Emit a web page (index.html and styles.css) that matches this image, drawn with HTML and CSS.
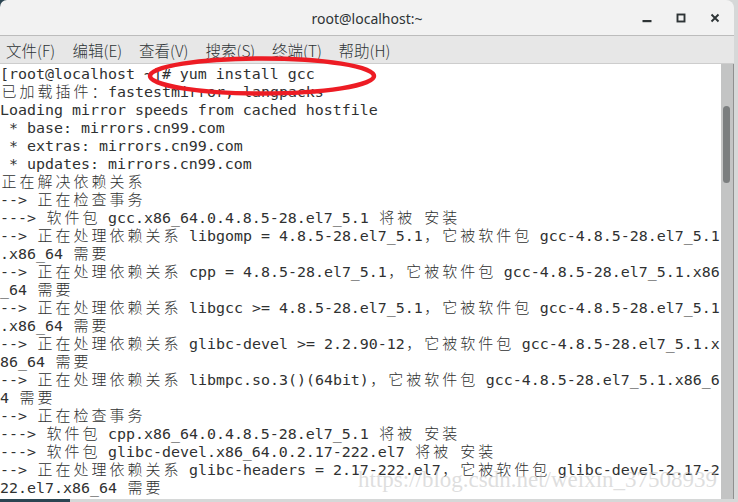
FILE: index.html
```html
<!DOCTYPE html>
<html>
<head>
<meta charset="utf-8">
<title>root@localhost:~</title>
<link rel="stylesheet" href="styles.css">
</head>
<body>
<div class="window">
  <header class="titlebar">
    <div class="spacer"></div>
    <div class="title">root@localhost:~</div>
    <div class="controls">
      <span class="btn"><svg width="10" height="10" viewBox="0 0 10 10"><rect x="0.5" y="7" width="9" height="2.2" fill="#2e3436"/></svg></span>
      <span class="btn"><svg width="10" height="10" viewBox="0 0 10 10"><rect x="1.5" y="1.5" width="7" height="7" fill="none" stroke="#2e3436" stroke-width="1.9"/></svg></span>
      <span class="btn"><svg width="10" height="10" viewBox="0 0 10 10"><path d="M1.5 1.5 L8.5 8.5 M8.5 1.5 L1.5 8.5" fill="none" stroke="#2e3436" stroke-width="1.9"/></svg></span>
    </div>
  </header>
  <nav class="menubar">
    <span class="item">文件(F)</span>
    <span class="item">编辑(E)</span>
    <span class="item">查看(V)</span>
    <span class="item">搜索(S)</span>
    <span class="item">终端(T)</span>
    <span class="item">帮助(H)</span>
  </nav>
  <main class="term">
    <div class="screen">
<div class="ln">[root@localhost ~]# yum install gcc</div>
<div class="ln"><span class="w">已加载插件：</span>fastestmirror, langpacks</div>
<div class="ln">Loading mirror speeds from cached hostfile</div>
<div class="ln"> * base: mirrors.cn99.com</div>
<div class="ln"> * extras: mirrors.cn99.com</div>
<div class="ln"> * updates: mirrors.cn99.com</div>
<div class="ln"><span class="w">正在解决依赖关系</span></div>
<div class="ln">--&gt; <span class="w">正在检查事务</span></div>
<div class="ln">---&gt; <span class="w">软件包</span> gcc.x86_64.0.4.8.5-28.el7_5.1 <span class="w">将被</span> <span class="w">安装</span></div>
<div class="ln">--&gt; <span class="w">正在处理依赖关系</span> libgomp = 4.8.5-28.el7_5.1<span class="w">，它被软件包</span> gcc-4.8.5-28.el7_5.1</div>
<div class="ln">.x86_64 <span class="w">需要</span></div>
<div class="ln">--&gt; <span class="w">正在处理依赖关系</span> cpp = 4.8.5-28.el7_5.1<span class="w">，它被软件包</span> gcc-4.8.5-28.el7_5.1.x86</div>
<div class="ln">_64 <span class="w">需要</span></div>
<div class="ln">--&gt; <span class="w">正在处理依赖关系</span> libgcc &gt;= 4.8.5-28.el7_5.1<span class="w">，它被软件包</span> gcc-4.8.5-28.el7_5.1</div>
<div class="ln">.x86_64 <span class="w">需要</span></div>
<div class="ln">--&gt; <span class="w">正在处理依赖关系</span> glibc-devel &gt;= 2.2.90-12<span class="w">，它被软件包</span> gcc-4.8.5-28.el7_5.1.x</div>
<div class="ln">86_64 <span class="w">需要</span></div>
<div class="ln">--&gt; <span class="w">正在处理依赖关系</span> libmpc.so.3()(64bit)<span class="w">，它被软件包</span> gcc-4.8.5-28.el7_5.1.x86_6</div>
<div class="ln">4 <span class="w">需要</span></div>
<div class="ln">--&gt; <span class="w">正在检查事务</span></div>
<div class="ln">---&gt; <span class="w">软件包</span> cpp.x86_64.0.4.8.5-28.el7_5.1 <span class="w">将被</span> <span class="w">安装</span></div>
<div class="ln">---&gt; <span class="w">软件包</span> glibc-devel.x86_64.0.2.17-222.el7 <span class="w">将被</span> <span class="w">安装</span></div>
<div class="ln">--&gt; <span class="w">正在处理依赖关系</span> glibc-headers = 2.17-222.el7<span class="w">，它被软件包</span> glibc-devel-2.17-2</div>
<div class="ln">22.el7.x86_64 <span class="w">需要</span></div>
    </div>
    <div class="scrollbar"><div class="thumb"></div></div>
    <div class="watermark">https://blog.csdn.net/weixin_37508939</div>
  </main>
</div>
<svg class="mark" width="738" height="502" viewBox="0 0 738 502"><ellipse cx="262" cy="76" rx="112" ry="17.5" fill="none" stroke="#ed1c24" stroke-width="4.5"/></svg>
</body>
</html>
```

FILE: styles.css
```css
html, body {
  margin: 0;
  padding: 0;
}
body {
  width: 738px;
  height: 502px;
  overflow: hidden;
  position: relative;
  background: linear-gradient(to right, #2b4552 70px, #d6d8d8 70px);
}
.window {
  width: 734px;
  display: flex;
  flex-direction: column;
}
.titlebar {
  height: 35px;
  border-bottom: 1px solid #bcbcbc;
  background: #f2f2f2;
  border-radius: 7px 8px 0 0;
  display: grid;
  grid-template-columns: 1fr auto 1fr;
  align-items: center;
}
.title {
  font-family: "Noto Sans", "Open Sans", sans-serif;
  font-size: 14px;
  color: #2e3436;
  padding-top: 1px;
}
.controls {
  display: flex;
  justify-content: flex-end;
  padding-right: 2px;
  height: 35px;
}
.btn {
  width: 34px;
  display: flex;
  align-items: center;
  justify-content: center;
}
.btn svg {
  display: block;
}
.menubar {
  border-bottom: 1px solid #cdcdcd;
  background: #e7e7e7;
  display: flex;
  align-items: center;
  padding-left: 6px;
  padding-top: 1px;
  height: 26px;
}
.item {
  width: 66.5px;
  font-family: "Noto Sans CJK SC", sans-serif;
  font-size: 15.5px;
  font-weight: 300;
  color: #2e3436;
  white-space: nowrap;
}
.term {
  position: relative;
  height: 435px;
  display: flex;
  background: #ffffff;
  border-right: 1px solid #8f8f8f;
}
.screen {
  width: 721px;
  padding-top: 1px;
  overflow: hidden;
  font-family: "DejaVu Sans Mono", monospace;
  font-size: 14.95px;
  color: #2f3131;
}
.ln {
  height: 18px;
  line-height: 18px;
  white-space: pre;
}
.w {
  font-family: "Noto Sans CJK SC", sans-serif;
  font-size: 15px;
  font-weight: 300;
  line-height: 1;
  letter-spacing: 3px;
  margin-left: 1.5px;
  margin-right: -1.5px;
}
.scrollbar {
  width: 12px;
  background: #c3c4c4;
  position: relative;
}
.thumb {
  position: absolute;
  left: 2px;
  top: 42px;
  width: 7px;
  height: 77px;
  border-radius: 4px;
  background: #7b7e7f;
}
.watermark {
  position: absolute;
  left: 358px;
  top: 404px;
  font-family: "Liberation Serif", serif;
  font-size: 23px;
  line-height: 23px;
  color: rgba(190, 190, 190, 0.5);
  white-space: nowrap;
  pointer-events: none;
}
.mark {
  position: absolute;
  left: 0;
  top: 0;
  pointer-events: none;
}
```
